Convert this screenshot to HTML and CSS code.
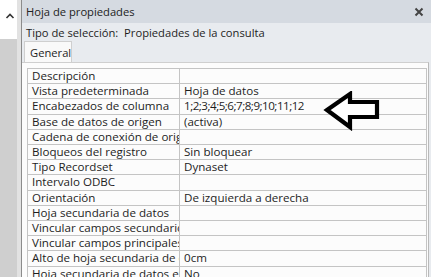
FILE: index.html
```html
<!DOCTYPE html>
<html>
<head>
    <title>Hoja de propiedades</title>
    <link rel="stylesheet" href="styles.css">
</head>
<body>
    <div class="side">
        <div class="side-top">
            <svg width="10" height="8" viewBox="0 0 10 8"><path d="M1.5 6 L5 2.5 L8.5 6" fill="none" stroke="#333" stroke-width="1.6"/></svg>
        </div>
        <div class="side-bottom"></div>
    </div>
    <div class="sheet">
        <div class="title-bar">
            <span>Hoja de propiedades</span>
            <svg class="close" width="10" height="10" viewBox="0 0 10 10"><path d="M1.5 1.5 L8.5 8.5 M8.5 1.5 L1.5 8.5" stroke="#444" stroke-width="2"/></svg>
        </div>
        <div class="selection">Tipo de selección:&nbsp; Propiedades de la consulta</div>
        <div class="tabs">
            <div class="tab">General</div>
        </div>
        <div class="tab-body">
            <table class="props">
                <tr><td>Descripción</td><td></td></tr>
                <tr><td>Vista predeterminada</td><td>Hoja de datos</td></tr>
                <tr><td>Encabezados de columna</td><td class="digits">1;2;3;4;5;6;7;8;9;10;11;12</td></tr>
                <tr><td>Base de datos de origen</td><td>(activa)</td></tr>
                <tr><td>Cadena de conexión de origen</td><td></td></tr>
                <tr><td>Bloqueos del registro</td><td>Sin bloquear</td></tr>
                <tr><td>Tipo Recordset</td><td>Dynaset</td></tr>
                <tr><td>Intervalo ODBC</td><td></td></tr>
                <tr><td>Orientación</td><td>De izquierda a derecha</td></tr>
                <tr><td>Hoja secundaria de datos</td><td></td></tr>
                <tr><td>Vincular campos secundarios</td><td></td></tr>
                <tr><td>Vincular campos principales</td><td></td></tr>
                <tr><td>Alto de hoja secundaria de datos</td><td>0cm</td></tr>
                <tr><td>Hoja secundaria de datos expandida</td><td>No</td></tr>
            </table>
            <svg class="arrow" width="60" height="44" viewBox="0 0 60 44">
                <path d="M4 19 L27 3 L27 11 L54 11 L54 26 L27 26 L27 36 Z" fill="#fff" stroke="#000" stroke-width="4.2" stroke-linejoin="miter"/>
            </svg>
        </div>
    </div>
</body>
</html>
```

FILE: styles.css
```css
body {
    margin: 0;
    display: flex;
    height: 277px;
    overflow: hidden;
    font-family: "Open Sans", "Noto Sans", sans-serif;
    font-size: 11.2px;
    color: #1e1e1e;
    background: #f4f4f4;
}

.side {
    width: 17px;
    display: flex;
    flex-direction: column;
    border-right: 4px solid #e2e2e2;
    box-shadow: 1px 0 0 #8c8c8c;
}

.side-top {
    height: 39px;
    background: #fff;
    padding: 8px 0 0 5px;
    box-sizing: border-box;
}

.side-bottom {
    flex: 1;
    background: #cfcfcf;
}

.sheet {
    flex: 1;
    margin-left: 1px;
    display: flex;
    flex-direction: column;
    background: #e8ebef;
}

.title-bar {
    flex-shrink: 0;
    height: 23px;
    background: #d5dae1;
    display: flex;
    align-items: center;
    justify-content: space-between;
    padding: 0 7px 0 4px;
    color: #222;
}

.selection {
    flex-shrink: 0;
    height: 18px;
    padding-left: 4px;
    line-height: 20px;
}

.tabs {
    flex-shrink: 0;
    display: flex;
    padding-left: 2px;
}

.tab {
    width: 48px;
    height: 21px;
    line-height: 21px;
    padding-left: 5px;
    box-sizing: border-box;
    background: #f9f9f9;
    border: 1px solid #cfcfcf;
    border-bottom: none;
}

.tab-body {
    position: relative;
    flex: 1;
    margin-right: 2px;
    background: #fcfcfc;
    border-top: 1px solid #cfcfcf;
    border-right: 1px solid #b9b9b9;
    padding: 5px 0 0 5px;
}

.props {
    width: 400px;
    border-collapse: collapse;
    table-layout: fixed;
    font-size: 11.6px;
}

.props td {
    height: 14.2px;
    padding: 0 0 0 4px;
    border: 1px solid #c4c4c4;
    line-height: 14.2px;
    white-space: nowrap;
    overflow: hidden;
}

.props td:first-child {
    width: 147px;
}

.props .digits {
    letter-spacing: -0.5px;
}

.arrow {
    position: absolute;
    left: 301px;
    top: 28px;
}
```
